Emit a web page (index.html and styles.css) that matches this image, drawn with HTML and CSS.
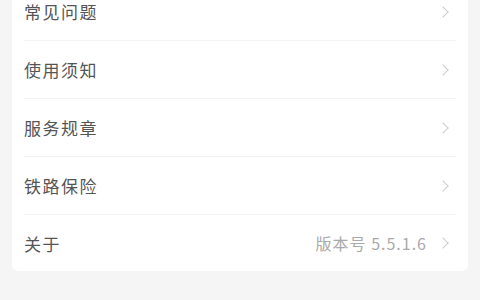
FILE: index.html
```html
<!DOCTYPE HTML>
<html>
    <head>
        <meta charset="UTF-8">
        <title>设置</title>
        <link rel="stylesheet" href="styles.css">
    </head>
    <body>
        <div id="wrap">
            <ul class="menu">
                <li><span class="name">常见问题</span><i class="arrow"></i></li>
                <li><span class="name">使用须知</span><i class="arrow"></i></li>
                <li><span class="name">服务规章</span><i class="arrow"></i></li>
                <li><span class="name">铁路保险</span><i class="arrow"></i></li>
                <li><span class="name">关于</span><span class="extra">版本号 5.5.1.6</span><i class="arrow"></i></li>
            </ul>
        </div>
    </body>
</html>
```

FILE: styles.css
```css
html,body{margin:0;padding:0;}
ul,li{margin:0;padding:0;list-style:none;}
body{
    background-color:#f5f5f5;
    font-family:"Noto Sans CJK SC","Noto Sans",sans-serif;
    color:#333;
}
#wrap{
    padding:0 12px;
}
#wrap .menu{
    margin-top:-17px;
    padding:0 12px;
    background-color:#fff;
    border-radius:0 0 6px 6px;
}
#wrap .menu li{
    display:flex;
    align-items:center;
    height:57px;
    border-bottom:1px solid #f3f3f3;
}
#wrap .menu li:last-child{
    height:56px;
    border-bottom:none;
}
#wrap .menu .name{
    flex:1;
    font-size:17px;
    letter-spacing:1.5px;
    color:#555;
}
#wrap .menu .extra{
    font-size:16px;
    letter-spacing:1px;
    color:#aaa;
    margin-right:12px;
}
#wrap .menu .arrow{
    display:block;
    width:7px;
    height:7px;
    margin-right:9px;
    border-top:1px solid #ccc;
    border-right:1px solid #ccc;
    transform:rotate(45deg);
}
```
